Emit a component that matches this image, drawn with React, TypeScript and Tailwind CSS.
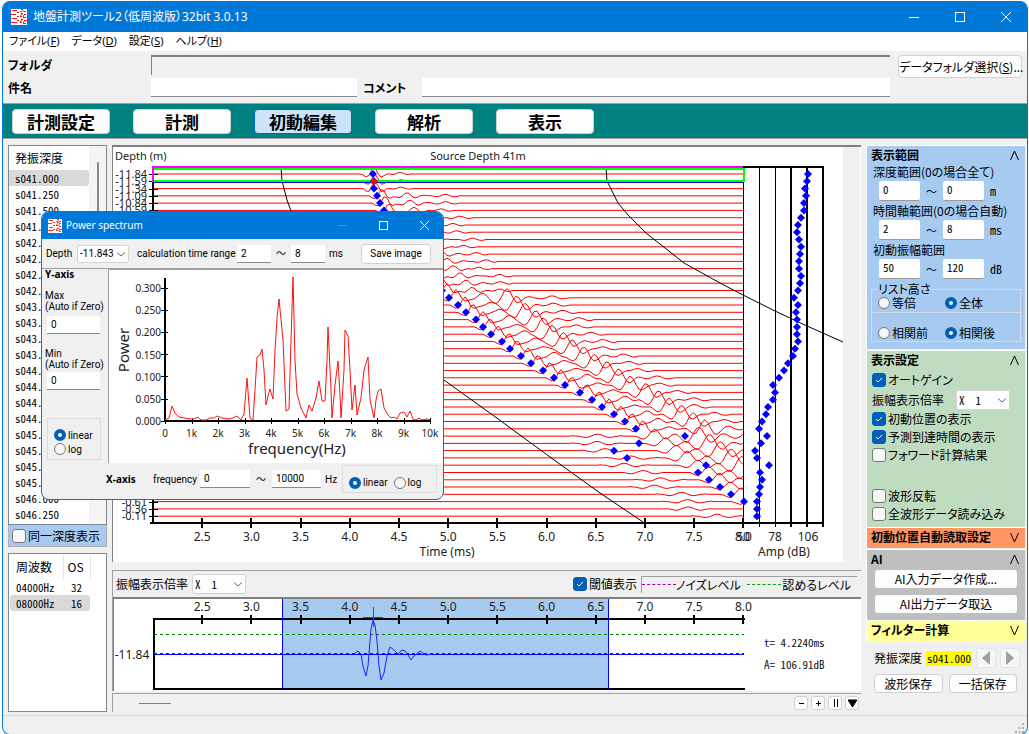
import React from "react";

const TEXT = "font-['Noto_Sans','Noto_Sans_CJK_JP',sans-serif]";
const DIALOG = "font-['Roboto','Noto_Sans_CJK_JP',sans-serif]";
const JP = "font-['Noto_Sans_CJK_JP',sans-serif] [font-feature-settings:'palt']";
const MONO = "font-['Noto_Sans_Mono_CJK_JP','Noto_Sans_CJK_JP',monospace]";

const ROWS = 48;
const rowY = (i: number) => 174 + i * 7.28;
const timeX = (t: number) => 153 + (t - 2) * 98.4;

const picks = [
  373, 374, 374, 377, 380, 384, 388, 392, 396, 401, 406, 411, 417, 423, 430, 436, 442, 449, 458, 466, 476, 483, 491,
  502, 510, 521, 531, 543, 554, 565, 580, 592, 602, 614, 625, 636, 685, 639, 614, 627, 706, 698, 709, 720, 731, 744,
];

const amps = [
  808, 807, 805, 806, 804, 804, 801, 798, 797, 799, 801, 800, 799, 799, 801, 800, 798, 794, 798, 796, 797, 797, 797,
  798, 795, 793, 788, 784, 779, 773, 775, 773, 768, 766, 762, 759, 767, 761, 755, 757, 769, 760, 762, 760, 759, 757,
  757, 757,
];

const arrival = (i: number) => {
  if (i < 36) return picks[i];
  return 636 + (i - 35) * 10.8;
};

const pulse = (d: number, center: number, width: number, period: number, amp: number) => {
  const u = (d - center) / width;
  return amp * Math.exp(-u * u) * Math.cos(((d - center) * 2 * Math.PI) / period);
};

function tracePath(i: number) {
  const y = rowY(i);
  const x0 = arrival(i);
  const wobble = Math.sin(i * 2.3);
  let d = `M153 ${y.toFixed(1)}`;
  for (let x = 156; x <= 744; x += 3) {
    const r = x - x0;
    let v = 0;
    if (i < 3) {
      v = pulse(r, 1, 9, 17, 7) + pulse(r, 27, 9, 20, 1.6);
    } else if (i < 17) {
      v = pulse(r, 5, 9, 18, 7) + pulse(r, 30, 13, 18, 3.2) + pulse(r, 64 + wobble * 8, 12, 19, 1.6);
    } else if (i < 36) {
      v =
        pulse(r, 7, 10, 21, 8) +
        pulse(r, 33, 12, 24, 3 + wobble) +
        pulse(r, 58 + (i - 17) * 0.6, 15, 24, 9) +
        pulse(r, 98 + wobble * 5, 14, 24, 2);
    } else {
      v =
        pulse(r, -58 + wobble * 10, 20, 26, 2) +
        pulse(r, 8, 14, 27, 6 + wobble) +
        pulse(r, 52, 22, 27, 9) +
        pulse(r, 96 + wobble * 6, 18, 30, 3.5);
    }
    if (Math.abs(v) < 0.4) v = 0;
    d += `L${Math.min(x, 743)} ${(y - v).toFixed(1)}`;
  }
  return d;
}

const Diamond = ({ x, y }: { x: number; y: number }) => (
  <path d={`M${x} ${y - 4}l4 4l-4 4l-4 -4z`} fill="#0000ff" />
);

const ticks = ["2.5", "3.0", "3.5", "4.0", "4.5", "5.0", "5.5", "6.0", "6.5", "7.0", "7.5", "8.0"];

function WaveChart() {
  return (
    <svg viewBox="113 147 730 415" className={`block min-w-0 flex-1 bg-white ${TEXT}`} role="img" aria-label="Source Depth 41m">
      <g fontSize="11" fill="#222">
        <text x="115" y="160">Depth (m)</text>
        <text x="478" y="160" textAnchor="middle">Source Depth 41m</text>
        {Array.from({ length: ROWS }, (_, i) => (
          <text key={i} x="147" y={rowY(i) + 4} textAnchor="end" fontSize="11">
            {(-11.84 + i * 0.2496).toFixed(2)}
          </text>
        ))}
      </g>
      <g stroke="#ff0000" strokeWidth="1" fill="none">
        {Array.from({ length: ROWS }, (_, i) => (
          <path key={i} d={tracePath(i)} />
        ))}
      </g>
      <g fill="none" stroke="#000" strokeWidth="1">
        <path d="M281 167L282 181L287 200L291 211L312 245L350 293L400 343L444 380L494 416L550 457L600 493L643 522" />
        <path d="M606 167L607 181L618 203L628 215L646 233L684 263L720 283L743 295L775 311L807 326L843 342" />
      </g>
      <g shapeRendering="crispEdges">
        <path d="M153 166V523M150 523H824M743 167H823" stroke="#000" strokeWidth="2" fill="none" />
        <path d="M743.500 167V522M759.500 167V527M775.500 167V527" stroke="#000" fill="none" />
        <path d="M791 167V527M807 167V527M823 166V527" stroke="#000" strokeWidth="2" fill="none" />
        {Array.from({ length: ROWS }, (_, i) => (
          <path key={i} d={`M149 ${Math.round(rowY(i))}.5H158`} stroke="#000" />
        ))}
        {ticks.map((t) => (
          <path key={t} d={`M${Math.round(timeX(+t))} 518V528`} stroke="#000" strokeWidth="2" />
        ))}
        <path d="M154 182.500H743" stroke="#0000ff" />
        <path d="M154 168.500H744V181H154" stroke="#00ff00" strokeWidth="2" fill="none" />
        <path d="M153 182V167H743" stroke="#ff00ff" strokeWidth="2" fill="none" />
      </g>
      {picks.map((x, i) => (
        <Diamond key={i} x={x} y={rowY(i)} />
      ))}
      <circle cx="374" cy="181.500" r="3" fill="#ff0000" />
      {amps.map((x, i) => (
        <Diamond key={i} x={x} y={rowY(i)} />
      ))}
      <g fontSize="12" fill="#222" textAnchor="middle">
        {ticks.map((t) => (
          <text key={t} x={timeX(+t)} y="541">{t}</text>
        ))}
        <text x="743" y="541">50</text>
        <text x="775" y="541">78</text>
        <text x="808" y="541">106</text>
        <text x="447" y="556">Time (ms)</text>
        <text x="784" y="556">Amp (dB)</text>
      </g>
    </svg>
  );
}

function SingleTrace() {
  return (
    <svg viewBox="114 598 747 92" className={`block w-full overflow-visible bg-white ${TEXT}`} role="img" aria-label="-11.84">
      <rect x="282" y="598" width="326" height="91" fill="#a6caf0" />
      <g fontSize="12" fill="#222" textAnchor="middle">
        {ticks.map((t) => (
          <text key={t} x={timeX(+t)} y="610">{t}</text>
        ))}
        <text x="132" y="658">-11.84</text>
      </g>
      <g shapeRendering="crispEdges" fill="none">
        <path d="M154 689V618H745M154 688H745" stroke="#000" strokeWidth="2" />
        {ticks.map((t) => (
          <path key={t} d={`M${Math.round(timeX(+t))} 614V623`} stroke="#000" strokeWidth="2" />
        ))}
        <path d="M282.500 598V688M608.500 598V688" stroke="#0000ff" />
        <path d="M154 633.500H744" stroke="#008000" strokeDasharray="3 3" />
        <path d="M154 653.500H744" stroke="#0000ff" />
        <path d="M154 652.500H744" stroke="#800060" strokeDasharray="3 3" />
      </g>
      <path
        d="M354 653L358 650L361 653L363 665L366 675L368 665L370 640L371 628L373 619L375 624L377 640L379 665L381 679L384 672L387 655L390 646L394 649L398 653L402 649L405 650L408 654L411 659L414 655L420 650L426 654L432 653"
        fill="none"
        stroke="#2020ff"
      />
      <path d="M363 616.500H383M373.500 606V626" stroke="#ff0000" strokeWidth="1" fill="none" />
      <g fontSize="11" fill="#111" className={MONO}>
        <text x="764" y="646">t= 4.2240ms</text>
        <text x="764" y="668">A= 106.91dB</text>
      </g>
    </svg>
  );
}

const spectrum =
  "165,420 169,418 172,406 175,413 179,417 184,418 190,419 194,419 198,417 201,420 206,420 210,418 214,418 217,416 222,418 228,419 233,418 237,416 241,420 244,414 247,378 250,418 253,420 255,390 257,357 260,355 262,349 264,370 266,405 268,396 270,389 273,399 275,350 277,318 279,299 283,340 286,411 289,409 291,340 293,277 295,360 297,394 301,408 306,418 309,405 312,411 316,398 319,381 322,401 325,401 327,360 328,327 331,390 332,418 335,385 338,361 340,395 341,418 344,370 345,330 348,336 350,370 352,410 355,385 357,415 361,398 364,370 368,357 370,400 374,418 376,400 378,391 381,389 384,408 388,415 391,418 394,417 397,419 400,413 404,412 407,417 410,411 413,419 416,420 419,418 422,420 427,419 430,420";

function SpectrumChart() {
  const yTicks = ["0.300", "0.250", "0.200", "0.150", "0.100", "0.050", "0.000"];
  return (
    <svg viewBox="108 269 334 193" className={`block w-full bg-white ${TEXT}`} role="img" aria-label="Power spectrum">
      <g fontSize="10" fill="#222">
        {yTicks.map((t, i) => (
          <text key={t} x="160" y={291 + i * 22.2} textAnchor="end">{t}</text>
        ))}
        {Array.from({ length: 11 }, (_, i) => (
          <text key={i} x={164 + i * 26.5} y="436" textAnchor="middle">{i === 0 ? "0" : `${i}k`}</text>
        ))}
      </g>
      <g fontSize="15" fill="#222" textAnchor="middle">
        <text x="296" y="453">frequency(Hz)</text>
        <text transform="translate(128 349) rotate(-90)">Power</text>
      </g>
      <g shapeRendering="crispEdges" stroke="#000" fill="none">
        <path d="M164 277V420H429" strokeWidth="2" />
        {yTicks.map((t, i) => (
          <path key={t} d={`M160 ${Math.round(287 + i * 22.1)}.5H167`} />
        ))}
        {Array.from({ length: 11 }, (_, i) => (
          <path key={i} d={`M${Math.round(164 + i * 26.5)}.5 417V423`} />
        ))}
      </g>
      <polyline points={spectrum} transform="translate(-1 -1)" fill="none" stroke="#ff1010" />
    </svg>
  );
}

function AppIcon({ className }: { className: string }) {
  return (
    <svg viewBox="0 0 16 16" className={className} aria-hidden="true">
      <rect width="16" height="16" fill="#fff" />
      <path
        d="M1 1.500H6M0 5.500H5M1 9.500H6M0 13.500H6M6 3.500H8M6 7.500H8M6 11.500H8M10 .5H12M9 2.500H11M13 2.500H15M10 4.500H12M13 5.500H15M9 7.500H11M12 8.500H15M10 10.500H12M13 11.500H16M9 13.500H11M12 14.500H15"
        stroke="#ff1010"
        fill="none"
        shapeRendering="crispEdges"
      />
      <path d="M11.500 1L13.500 3M11 5L9.500 7M13 6L12 8M11 10L9.500 13M13.500 12L12 14" stroke="#ff1010" fill="none" />
    </svg>
  );
}

function Check({ label, checked = false, className = "gap-0.5" }: { label: string; checked?: boolean; className?: string }) {
  return (
    <label className={`flex items-center ${className}`}>
      <span className="relative flex size-3.5 shrink-0">
        <input
          type="checkbox"
          defaultChecked={checked}
          className="peer size-3.5 appearance-none rounded-[3px] border border-[#777] bg-[#f8f8f8] checked:border-[#005fb8] checked:bg-[#005fb8]"
        />
        <svg viewBox="0 0 14 14" className="pointer-events-none absolute inset-0 hidden peer-checked:block" aria-hidden="true">
          <path d="M4 7L6 9L10 5" stroke="#fff" fill="none" />
        </svg>
      </span>
      <span className="whitespace-nowrap">{label}</span>
    </label>
  );
}

function Radio({ name, label, checked = false, className = "" }: { name: string; label: string; checked?: boolean; className?: string }) {
  return (
    <label className={`flex items-center gap-0.5 ${className}`}>
      <input
        type="radio"
        name={name}
        defaultChecked={checked}
        className="size-3 shrink-0 appearance-none rounded-full border border-[#777] bg-[#f6f6f6] checked:border-4 checked:border-[#005fb8] checked:bg-white"
      />
      <span className="whitespace-nowrap">{label}</span>
    </label>
  );
}

function Select({ label, value, className }: { label: string; value: string; className: string }) {
  return (
    <span className={`relative flex shrink-0 ${className}`}>
      <select aria-label={label} className="h-full w-full appearance-none rounded-[2px] border border-[#d4d4d4] bg-[#fdfdfd] pl-0.5">
        <option>{value}</option>
      </select>
      <svg viewBox="0 0 8 8" className="pointer-events-none absolute top-1/2 right-1 size-2 -translate-y-1/2" aria-hidden="true">
        <path d="M0 2.500L4 6L8 2.500" stroke="#666" fill="none" />
      </svg>
    </span>
  );
}

const BTN = "rounded-[4px] border border-[#d0d0d0] bg-[#fdfdfd]";
const FIELD = "min-w-0 border-b border-[#8a8a8a] bg-white px-1";

function Range({ title, from, to, unit }: { title: string; from: string; to: string; unit: string }) {
  return (
    <div>
      <div className="h-[15px] pl-1.5 leading-[15px] whitespace-nowrap">{title}</div>
      <div className={`flex h-6 items-center pl-3 text-[11px] ${MONO}`}>
        <input aria-label={`${title} min`} defaultValue={from} className="h-5 w-[41px] rounded-[2px] border-b border-[#999] bg-white px-1 pb-1" />
        <span className="w-[23px] text-center">～</span>
        <input aria-label={`${title} max`} defaultValue={to} className="h-5 w-[41px] rounded-[2px] border-b border-[#999] bg-white px-1 pb-1" />
        <span className="pl-1.5 text-xs">{unit}</span>
      </div>
    </div>
  );
}

function SectionTitle({ title, open }: { title: string; open: boolean }) {
  return (
    <button className="flex h-[18px] w-full items-center justify-between pr-1.5 pl-1 text-left font-bold">
      <span className="whitespace-nowrap">{title}</span>
      <svg viewBox="0 0 9 9" className="size-[9px]" aria-hidden="true">
        <path d={open ? "M.5 9L4.500 0L8.500 9" : "M.5 0L4.500 9L8.500 0"} stroke="#000" fill="none" />
      </svg>
    </button>
  );
}

function RightPanel() {
  return (
    <aside className={`flex w-[159px] shrink-0 flex-col text-xs ${JP}`}>
      <section className="flex h-[204px] flex-col border-t border-l border-white bg-[#a6caf0]">
        <SectionTitle title="表示範囲" open />
        <Range title="深度範囲(0の場合全て)" from="0" to="0" unit="m" />
        <Range title="時間軸範囲(0の場合自動)" from="2" to="8" unit="ms" />
        <Range title="初動振幅範囲" from="50" to="120" unit="dB" />
        <fieldset className="mx-1 mt-0.5 h-[30px] border border-[#cfdbe6] pl-1.5">
          <legend className="h-3 leading-3">リスト高さ</legend>
          <div className="flex h-4 items-center">
            <Radio name="height" label="等倍" className="w-[67px]" />
            <Radio name="height" label="全体" checked />
          </div>
        </fieldset>
        <div className="mx-1 flex h-[29px] items-end border border-t-0 border-[#cfdbe6] pl-1.5" role="radiogroup" aria-label="相関">
          <Radio name="corr" label="相関前" className="w-[67px]" />
          <Radio name="corr" label="相関後" checked />
        </div>
      </section>
      <section className="mt-px h-[177px] border-t border-l border-white bg-[#c0dcc0]">
        <SectionTitle title="表示設定" open />
        <div className="flex flex-col pl-[5px]">
          <Check label="オートゲイン" checked className="h-[22px] gap-0.5" />
          <div className="flex h-[18px] items-center gap-3">
            <span className="whitespace-nowrap">振幅表示倍率</span>
            <Select label="振幅表示倍率" value={"X\u00a0\u00a01"} className={`h-5 w-[54px] text-[11px] ${MONO}`} />
          </div>
          <Check label="初動位置の表示" checked className="mt-px h-[18px] gap-0.5" />
          <Check label="予測到達時間の表示" checked className="h-[18px] gap-0.5" />
          <Check label="フォワード計算結果" className="h-[17px] gap-0.5" />
          <Check label="波形反転" className="mt-6 h-[18px] gap-0.5" />
          <Check label="全波形データ読み込み" className="h-[17px] gap-0.5" />
        </div>
      </section>
      <section className="h-[21px] border-t border-l border-white bg-[#ff9664]">
        <SectionTitle title="初動位置自動読取設定" open={false} />
      </section>
      <section className="mt-px flex h-[71px] flex-col border-t border-l border-white bg-[#bfbfbf]">
        <SectionTitle title="AI" open />
        <div className="flex flex-col gap-[7px] px-2 pt-0.5">
          <button className="h-[18px] rounded-[3px] bg-[#fdfdfd] leading-[18px]">AI入力データ作成...</button>
          <button className="h-[18px] rounded-[3px] bg-[#fdfdfd] leading-[18px]">AI出力データ取込</button>
        </div>
      </section>
      <section className="h-[22px] border-t border-l border-white bg-[#ffff96]">
        <SectionTitle title="フィルター計算" open={false} />
      </section>
      <div className="flex h-8 items-center pl-2">
        <span className="whitespace-nowrap">発振深度</span>
        <span className={`ml-1 bg-[#ffff00] px-px text-[11px] leading-[15px] ${MONO}`}>s041.000</span>
        <button aria-label="前へ" className="ml-1 flex size-5 items-center justify-center rounded-[3px] border border-[#e4e4e4] bg-[#f6f6f6]">
          <svg viewBox="0 0 8 14" className="h-3.5 w-2"><path d="M8 0V14L0 7z" fill="#a0a0a0" /></svg>
        </button>
        <button aria-label="次へ" className="ml-1 flex size-5 items-center justify-center rounded-[3px] border border-[#e4e4e4] bg-[#f6f6f6]">
          <svg viewBox="0 0 8 14" className="h-3.5 w-2"><path d="M0 0V14L8 7z" fill="#a0a0a0" /></svg>
        </button>
      </div>
      <div className="flex gap-1.5 px-2">
        <button className={`h-[19px] flex-1 leading-[15px] ${BTN}`}>波形保存</button>
        <button className={`h-[19px] flex-1 leading-[15px] ${BTN}`}>一括保存</button>
      </div>
    </aside>
  );
}

function LeftPanel() {
  const depths = Array.from({ length: 22 }, (_, i) => `s0${(41 + i * 0.25).toFixed(3)}`);
  return (
    <aside className={`flex w-[99px] shrink-0 flex-col text-xs ${JP}`}>
      <div className="flex h-[380px] border border-[#828790] bg-white">
        <div className="min-w-0 flex-1">
          <div className="flex h-6 items-center pl-1.5">発振深度</div>
          <ul className={`text-[11px] ${MONO}`}>
            {depths.map((d, i) => (
              <li key={d} className={`flex h-4 items-center pl-1.5 ${i === 0 ? "rounded-r-[3px] bg-[#d9d9d9]" : ""}`}>
                {d}
              </li>
            ))}
          </ul>
        </div>
        <div className="flex w-[17px] justify-center border-l border-[#f0f0f0] bg-[#f4f4f4] pt-4">
          <div className="h-16 w-0.5 rounded bg-[#8a8a8a]" />
        </div>
      </div>
      <div className="flex h-[22px] items-center border border-t-0 border-[#b0b0b0] bg-[#a6caf0] pl-[3px]">
        <Check label="同一深度表示" className="gap-0.5" />
      </div>
      <div className="mt-1.5 min-h-0 flex-1 border border-[#828790] bg-white p-px">
        <table className="border-collapse text-left">
          <thead>
            <tr className="h-6">
              <th className="w-[53px] border-r border-[#e5e5e5] pl-1.5 font-normal">周波数</th>
              <th className="w-[27px] border-r border-[#e5e5e5] pl-1 font-normal">OS</th>
            </tr>
          </thead>
          <tbody className={`text-[11px] leading-4 ${MONO}`}>
            <tr className="h-4">
              <td className="pl-1.5">04000Hz</td>
              <td className="pl-2">32</td>
            </tr>
            <tr className="h-4 bg-[#d9d9d9]">
              <td className="rounded-l-[3px] pl-1.5">08000Hz</td>
              <td className="rounded-r-[3px] pl-2">16</td>
            </tr>
          </tbody>
        </table>
      </div>
    </aside>
  );
}

function CenterPanel() {
  return (
    <main className="flex min-w-0 flex-1 flex-col">
      <div className="flex border-t-2 border-l border-[#808080] bg-[#f0f0f0]">
        <WaveChart />
        <div className="w-[18px] shrink-0 border-r border-white" />
      </div>
      <div className="mt-2 border-t border-l border-[#a0a0a0]">
        <div className={`flex h-[26px] items-center pr-1 pl-[3px] text-xs ${JP}`}>
          <span className="whitespace-nowrap">振幅表示倍率</span>
          <Select label="波形振幅表示倍率" value={"X\u00a0\u00a01"} className={`ml-1 h-5 w-[54px] text-[11px] ${MONO}`} />
          <div className="flex-1" />
          <Check label="閾値表示" checked className="gap-0.5" />
          <div className="ml-1 flex h-[17px] w-[216px] items-center border-t border-l border-[#a0a0a0] pr-1.5">
            <span className="w-[34px] border-t border-dashed border-[#a000a0]" />
            <span className="whitespace-nowrap">ノイズレベル</span>
            <span className="ml-1.5 w-[34px] border-t border-dashed border-[#00a000]" />
            <span className="ml-auto whitespace-nowrap">認めるレベル</span>
          </div>
        </div>
        <div className="border-t-2 border-l border-[#808080]">
          <SingleTrace />
        </div>
      </div>
      <div className="mt-0.5 flex h-[19px] items-center border-t border-l border-[#a0a0a0] pr-0.5 pl-[26px]">
        <div className="h-px w-8 bg-[#808080]" />
        <div className="flex-1" />
        <div className="flex gap-[3px]">
          {["M2 5.500H7", "M2 5.500H7M4.500 3V8", "M3.500 1V9M6.500 1V9", "M0 2H9L4.500 9z"].map((d, i) => (
            <button
              key={d}
              aria-label={["縮小", "拡大", "一時停止", "メニュー"][i]}
              className="flex size-3.5 items-center justify-center rounded-[3px] border border-[#d0d0d0] bg-[#fdfdfd]"
            >
              <svg viewBox="0 0 9 10" className="h-2.5 w-[9px] shrink-0"><path d={d} stroke="#000" fill={i === 3 ? "#000" : "none"} /></svg>
            </button>
          ))}
        </div>
      </div>
    </main>
  );
}

function SpectrumDialog() {
  return (
    <div
      role="dialog"
      aria-label="Power spectrum"
      className={`absolute top-[210px] left-[38px] w-[403px] overflow-hidden rounded-lg border border-[#0078d7] bg-[#f0f0f0] text-[10px] text-black ${DIALOG}`}
    >
      <div className={`flex h-[27px] items-center bg-[#0078d7] pr-3.5 pl-1.5 text-white ${TEXT}`}>
        <AppIcon className="size-3.5" />
        <span className="pl-1">Power spectrum</span>
        <div className="flex-1" />
        <div className="flex items-center gap-8">
          <button aria-label="Minimize"><svg viewBox="0 0 9 9" className="size-[9px]"><path d="M0 4.500H9" stroke="#3f98e0" /></svg></button>
          <button aria-label="Maximize"><svg viewBox="0 0 9 9" className="size-[9px]"><rect x=".5" y=".5" width="8" height="8" fill="none" stroke="#fff" /></svg></button>
          <button aria-label="Close"><svg viewBox="0 0 9 9" className="size-[9px]"><path d="M0 0L9 9M9 0L0 9" stroke="#fff" /></svg></button>
        </div>
      </div>
      <div className="flex h-[30px] items-center border-b border-[#a0a0a0] pr-3 pl-1">
        <span className="w-[31px]">Depth</span>
        <Select label="Depth" value="-11.843" className="h-[18px] w-[52px]" />
        <span className="w-[108px] shrink-0 pl-2 whitespace-nowrap">calculation time range</span>
        <input aria-label="time from" defaultValue="2" className={`h-[18px] w-[34px] shrink-0 ${FIELD}`} />
        <span className="w-5 text-center">～</span>
        <input aria-label="time to" defaultValue="8" className={`h-[18px] w-[34px] shrink-0 ${FIELD}`} />
        <span className="ml-1">ms</span>
        <button className={`ml-auto h-5 w-[70px] shrink-0 ${BTN}`}>Save image</button>
      </div>
      <div className="flex">
        <div className="flex w-[66px] shrink-0 flex-col pl-[3px] leading-[11px]">
          <div className={`font-bold ${TEXT}`}>Y-axis</div>
          <label className="mt-2.5 whitespace-nowrap">
            <span className="block">Max</span>
            <span className="block">(Auto if Zero)</span>
            <input defaultValue="0" className={`mt-1 ml-0.5 block h-[18px] w-[53px] ${FIELD}`} />
          </label>
          <label className="mt-3.5 whitespace-nowrap">
            <span className="block">Min</span>
            <span className="block">(Auto if Zero)</span>
            <input defaultValue="0" className={`mt-0.5 ml-0.5 block h-[18px] w-[53px] ${FIELD}`} />
          </label>
          <div role="radiogroup" aria-label="Y-axis scale" className="mt-7 ml-0.5 flex h-[42px] w-[54px] flex-col justify-end gap-0.5 border border-[#dcdcdc] pb-1 pl-1.5">
            <Radio name="yscale" label="linear" checked />
            <Radio name="yscale" label="log" />
          </div>
        </div>
        <div className="min-w-0 flex-1 border-t border-l border-[#a0a0a0]">
          <SpectrumChart />
        </div>
      </div>
      <div className="flex h-[36px] items-center pr-1.5 pb-1 pl-16">
        <span className={`w-[31px] font-bold ${TEXT}`}>X-axis</span>
        <span className="w-[49px] pl-4">frequency</span>
        <input aria-label="frequency from" defaultValue="0" className={`ml-3.5 h-[18px] w-[50px] ${FIELD}`} />
        <span className="w-[22px] text-center">～</span>
        <input aria-label="frequency to" defaultValue="10000" className={`h-[18px] w-[49px] ${FIELD}`} />
        <span className="ml-1">Hz</span>
        <div role="radiogroup" aria-label="X-axis scale" className="ml-auto flex h-[28px] w-[95px] items-end gap-1.5 border border-[#dcdcdc] pb-0.5 pl-1.5">
          <Radio name="xscale" label="linear" checked />
          <Radio name="xscale" label="log" />
        </div>
      </div>
    </div>
  );
}

export default function App() {
  const menus: [string, string][] = [["ファイル", "F"], ["データ", "D"], ["設定", "S"], ["ヘルプ", "H"]];
  const modes = ["計測設定", "計測", "初動編集", "解析", "表示"];
  return (
    <div className="min-h-screen bg-white pt-px pr-px pl-0.5 text-black">
      <div className="relative flex min-h-[733px] flex-col overflow-hidden rounded-lg border-x border-b border-[#0078d7] bg-[#f0f0f0]">
        <header className={`flex h-[31px] items-center bg-[#0078d7] pr-4 pl-2 text-xs text-white ${TEXT} [font-feature-settings:'palt']`}>
          <AppIcon className="size-4" />
          <h1 className="pl-1.5 whitespace-nowrap">地盤計測ツール2（低周波版）32bit 3.0.13</h1>
          <div className="flex-1" />
          <div className="flex items-center gap-9">
            <button aria-label="最小化"><svg viewBox="0 0 10 10" className="size-2.5"><path d="M0 5.500H10" stroke="#fff" /></svg></button>
            <button aria-label="最大化"><svg viewBox="0 0 10 10" className="size-2.5"><rect x=".5" y=".5" width="9" height="9" fill="none" stroke="#fff" /></svg></button>
            <button aria-label="閉じる"><svg viewBox="0 0 10 10" className="size-2.5"><path d="M0 0L10 10M10 0L0 10" stroke="#fff" /></svg></button>
          </div>
        </header>
        <nav className={`flex h-[19px] items-center gap-3 bg-white pl-1.5 text-[11px] ${TEXT} [font-feature-settings:'palt']`}>
          {menus.map(([name, key]) => (
            <button key={key} className="whitespace-nowrap">{name}(<u>{key}</u>)</button>
          ))}
        </nav>
        <div className={`flex h-[53px] items-start border-b border-[#a0a0a0] pt-1 pr-[5px] pl-[5px] text-xs ${JP}`}>
          <div className="grid min-w-0 flex-1 grid-cols-[143px_1fr] gap-y-[3px]">
            <label htmlFor="folder" className="leading-5 font-bold">フォルダ</label>
            <input id="folder" readOnly className="h-5 w-full border-t-2 border-l border-[#808080] bg-[#f0f0f0]" />
            <label htmlFor="subject" className="leading-[19px] font-bold">件名</label>
            <div className="flex">
              <input id="subject" className={`h-[19px] w-[206px] ${FIELD}`} />
              <label htmlFor="comment" className="w-[65px] pl-1.5 leading-[19px] font-bold">コメント</label>
              <input id="comment" className={`h-[19px] flex-1 ${FIELD}`} />
            </div>
          </div>
          <button className={`ml-2 h-[23px] w-[124px] whitespace-nowrap ${BTN}`}>データフォルダ選択(<u>S</u>)...</button>
        </div>
        <div className="flex h-[34px] items-center gap-[23px] bg-[#008080] pl-[9px]">
          {modes.map((m) => (
            <button
              key={m}
              className={`h-[25px] w-[98px] rounded-[4px] border text-[17px] leading-[21px] font-bold ${JP} ${
                m === "初動編集" ? "border-[#0067c0] bg-[#cce4f7]" : "border-[#d0d0d0] bg-[#fdfdfd]"
              }`}
            >
              {m}
            </button>
          ))}
        </div>
        <div className="flex flex-1 gap-[5px] border-t border-[#a0a0a0] pt-1.5 pr-0.5 pb-[3px] pl-[5px]">
          <LeftPanel />
          <CenterPanel />
          <RightPanel />
        </div>
        <footer className="flex h-[19px] items-end justify-end border-t border-[#d4d4d4] pr-0.5 pb-px">
          <svg viewBox="0 0 10 10" className="size-2.5" aria-hidden="true">
            <path d="M7 1h2M7 5h2M3.500 5h2M0 9h2M3.500 9h2M7 9h2" stroke="#b0b0b0" strokeWidth="2" />
          </svg>
        </footer>
        <SpectrumDialog />
      </div>
    </div>
  );
}
